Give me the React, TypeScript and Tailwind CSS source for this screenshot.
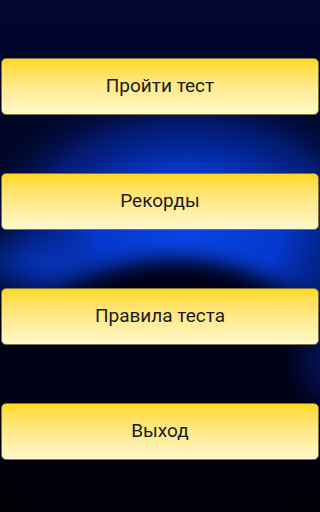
const items = ["Пройти тест", "Рекорды", "Правила теста", "Выход"];

const Backdrop = () => (
    <svg
        className="absolute inset-0 h-full w-full"
        viewBox="0 0 307 512"
        preserveAspectRatio="none"
    >
        <defs>
            <linearGradient id="base" x1="0" y1="0" x2="0" y2="1">
                <stop offset="0" stopColor="#01072e"/>
                <stop offset="0.6" stopColor="#00041c"/>
                <stop offset="1" stopColor="#000005"/>
            </linearGradient>
            <radialGradient id="glow" cx="180" cy="235" r="220" gradientUnits="userSpaceOnUse"
                            gradientTransform="translate(180 235) scale(1 0.72) translate(-180 -235)">
                <stop offset="0" stopColor="#0845e6"/>
                <stop offset="0.4" stopColor="#0538cc"/>
                <stop offset="0.7" stopColor="#03218a" stopOpacity="0.75"/>
                <stop offset="1" stopColor="#01082e" stopOpacity="0"/>
            </radialGradient>
            <radialGradient id="left" cx="40" cy="262" r="70" gradientUnits="userSpaceOnUse"
                            gradientTransform="translate(40 262) scale(1.4 0.5) translate(-40 -262)">
                <stop offset="0" stopColor="#0636c0" stopOpacity="0.8"/>
                <stop offset="1" stopColor="#0636c0" stopOpacity="0"/>
            </radialGradient>
            <radialGradient id="rim" cx="330" cy="360" r="60" gradientUnits="userSpaceOnUse">
                <stop offset="0" stopColor="#0a2a9a" stopOpacity="0.7"/>
                <stop offset="1" stopColor="#0a2a9a" stopOpacity="0"/>
            </radialGradient>
            <filter id="soft" x="-30%" y="-30%" width="160%" height="160%">
                <feGaussianBlur stdDeviation="10"/>
            </filter>
        </defs>
        <rect width="307" height="512" fill="url(#base)"/>
        <rect width="307" height="512" fill="url(#glow)"/>
        <rect width="307" height="512" fill="url(#left)"/>
        <ellipse cx="160" cy="410" rx="175" ry="150" transform="rotate(-8 160 410)" fill="#000418"
                 filter="url(#soft)"/>
        <rect width="307" height="512" fill="url(#rim)"/>
        <rect y="450" width="307" height="62" fill="#000003" opacity="0.6" filter="url(#soft)"/>
    </svg>
);

export default function App() {
    return (
        <div className="relative h-[512px] w-full overflow-hidden font-['Roboto',sans-serif]">
            <Backdrop/>
            <div className="relative flex flex-col gap-[58px] px-px pt-[58px]">
                {items.map((label) => (
                    <button
                        key={label}
                        className="flex h-[57px] w-full items-center justify-center rounded-[5px] border border-[#7d7440] bg-gradient-to-b from-[#ffd910] to-[#fff8cc] text-[19px] text-[#1b1b1b]"
                    >
                        {label}
                    </button>
                ))}
            </div>
        </div>
    );
}
